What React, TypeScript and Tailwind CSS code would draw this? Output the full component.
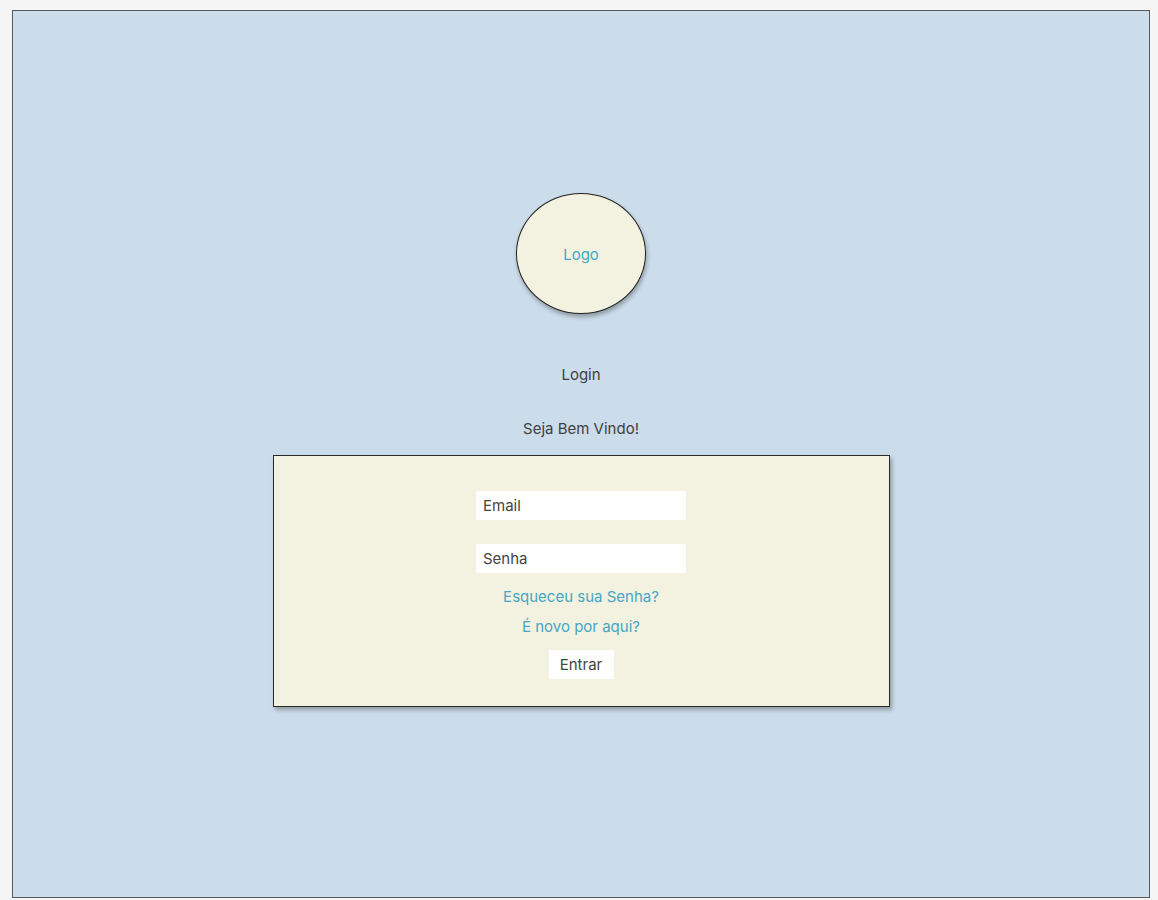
import React from "react";

export default function App() {
  return (
    <div
      className="min-h-[900px] bg-[#f5f5f5] pl-[12px] pt-[10px]"
      style={{ fontFamily: "Inter, 'Noto Sans', sans-serif" }}
    >
      <div className="w-[1138px] h-[888px] border border-[#5a5a5a] bg-[#cbdcea] flex flex-col items-center">
        <div className="mt-[182px] w-[130px] h-[121px] rounded-[50%] border border-[#222] bg-[#f3f2e0] shadow-[1px_3px_4px_rgba(0,0,0,0.3)] flex items-center justify-center pt-[3px]">
          <span className="text-[15px] text-[#45a6c6]">Logo</span>
        </div>

        <div className="mt-[51px] h-[20px] leading-[20px] text-[15px] text-[#404040]">Login</div>
        <div className="mt-[34px] h-[20px] leading-[20px] text-[15px] text-[#404040]">Seja Bem Vindo!</div>

        <div className="mt-[16px] w-[617px] h-[252px] border border-[#2a2a2a] bg-[#f3f2e0] shadow-[2px_3px_4px_rgba(0,0,0,0.3)] flex flex-col items-center">
          <div className="mt-[35px] w-[210px] h-[29px] bg-white px-[7px] pt-[2px] flex items-center text-[15px] text-[#444]">
            Email
          </div>
          <div className="mt-[24px] w-[210px] h-[29px] bg-white px-[7px] pt-[2px] flex items-center text-[15px] text-[#444]">
            Senha
          </div>
          <a className="mt-[14px] h-[20px] leading-[20px] text-[15px] text-[#45a6c6]">Esqueceu sua Senha?</a>
          <a className="mt-[10px] h-[20px] leading-[20px] text-[15px] text-[#45a6c6]">É novo por aqui?</a>
          <button
            type="button"
            className="mt-[13px] w-[65px] h-[29px] bg-white pt-[2px] text-[15px] text-[#444] flex items-center justify-center"
          >
            Entrar
          </button>
        </div>
      </div>
    </div>
  );
}
